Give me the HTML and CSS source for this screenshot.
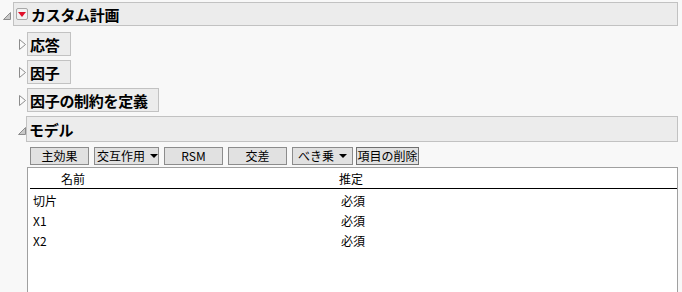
FILE: index.html
```html
<!DOCTYPE html>
<html lang="ja">
<head>
  <meta charset="UTF-8">
  <title>カスタム計画</title>
  <link rel="stylesheet" href="styles.css">
</head>
<body>

  <div class="node top">
    <svg class="tri-open" width="8" height="8" viewBox="0 0 8 8"><path d="M7.5 0.5 L7.5 7.5 L0.5 7.5 Z" fill="#c8c8c8" stroke="#8c8c8c" stroke-width="1"/></svg>
    <div class="bar main">
      <span class="redbtn"><svg width="8" height="5" viewBox="0 0 8 5"><path d="M0 0 L8 0 L4 5 Z" fill="#e0102a"/></svg></span>
      <span class="title">カスタム計画</span>
    </div>
  </div>

  <div class="children">
    <div class="node">
      <svg class="tri-closed" width="7" height="11" viewBox="0 0 7 11"><path d="M0.5 0.5 L6.5 5.5 L0.5 10.5 Z" fill="#fafafa" stroke="#8c8c8c" stroke-width="1"/></svg>
      <div class="bar small w-resp">応答</div>
    </div>
    <div class="node">
      <svg class="tri-closed" width="7" height="11" viewBox="0 0 7 11"><path d="M0.5 0.5 L6.5 5.5 L0.5 10.5 Z" fill="#fafafa" stroke="#8c8c8c" stroke-width="1"/></svg>
      <div class="bar small w-fact">因子</div>
    </div>
    <div class="node">
      <svg class="tri-closed" width="7" height="11" viewBox="0 0 7 11"><path d="M0.5 0.5 L6.5 5.5 L0.5 10.5 Z" fill="#fafafa" stroke="#8c8c8c" stroke-width="1"/></svg>
      <div class="bar small w-cons">因子の制約を定義</div>
    </div>
    <div class="node model">
      <svg class="tri-open" width="8" height="8" viewBox="0 0 8 8"><path d="M7.5 0.5 L7.5 7.5 L0.5 7.5 Z" fill="#c8c8c8" stroke="#8c8c8c" stroke-width="1"/></svg>
      <div class="bar wide">モデル</div>
    </div>

    <div class="model-body">
      <div class="buttons">
        <button class="b-main">主効果</button>
        <button class="b-menu b-inter">交互作用 <span class="caret"></span></button>
        <button class="b-rsm">RSM</button>
        <button class="b-cross">交差</button>
        <button class="b-menu b-power">べき乗 <span class="caret"></span></button>
        <button class="b-del">項目の削除</button>
      </div>

      <div class="table">
        <div class="row head">
          <span class="c1">名前</span>
          <span class="c2">推定</span>
        </div>
        <div class="row">
          <span class="c1">切片</span>
          <span class="c2">必須</span>
        </div>
        <div class="row">
          <span class="c1">X1</span>
          <span class="c2">必須</span>
        </div>
        <div class="row">
          <span class="c1">X2</span>
          <span class="c2">必須</span>
        </div>
      </div>
    </div>
  </div>

</body>
</html>
```

FILE: styles.css
```css
html {
  overflow: hidden;
}

body {
  margin: 0;
  padding: 2px 4px 0 3px;
  background: #f8f8f8;
  font-family: "Noto Sans CJK JP", "Noto Sans", sans-serif;
  font-size: 12px;
  color: #000;
}

.node {
  display: flex;
  align-items: center;
}

.tri-open {
  flex: none;
  margin-right: 2px;
}

.top .tri-open {
  margin-top: 3px;
}

.tri-closed {
  flex: none;
  margin-right: 1px;
  margin-top: 1px;
}

.bar {
  box-sizing: border-box;
  height: 24px;
  background: #ececec;
  border: 1px solid #c2c2c2;
  display: flex;
  align-items: center;
  font-weight: bold;
  font-size: 15px;
  line-height: 1;
  letter-spacing: -0.3px;
}

.main {
  flex: 1;
  padding-left: 2px;
}

.redbtn {
  box-sizing: border-box;
  width: 12px;
  height: 12px;
  border: 1px solid #a8a8a8;
  border-radius: 2px;
  background: #f2f2f2;
  display: flex;
  align-items: center;
  justify-content: center;
  margin-right: 3px;
}

.children {
  padding-left: 16px;
  padding-top: 6px;
}

.children .node {
  margin-bottom: 4px;
}

.small {
  padding: 0 0 0 2px;
}

.w-resp { width: 44px; }
.w-fact { width: 44px; }
.w-cons { width: 132px; }

.children .model {
  margin-bottom: 0;
}

.model .tri-open {
  margin-right: 0;
  margin-left: -1px;
  margin-top: 3px;
}

.wide {
  flex: 1;
  height: 26px;
  padding-left: 2px;
}

.model-body {
  padding-left: 8px;
}

.buttons {
  display: flex;
  gap: 5px;
  padding: 5px 0 2px 3px;
}

button {
  box-sizing: border-box;
  height: 18px;
  padding: 0;
  border: 1px solid #8c8c8c;
  background: #e1e1e1;
  font-family: inherit;
  font-size: 12px;
  line-height: 1;
  color: #000;
  display: flex;
  align-items: center;
  justify-content: center;
}

.b-main { width: 59px; }
.b-inter { width: 65px; justify-content: flex-start; padding-left: 2px; }
.b-rsm { width: 59px; }
.b-cross { width: 59px; }
.b-power { width: 61px; }
.b-del { width: 63px; margin-left: -2px; border-color: #707070; }

.caret {
  display: inline-block;
  width: 0;
  height: 0;
  border-left: 4px solid transparent;
  border-right: 4px solid transparent;
  border-top: 4px solid #000;
  margin-left: 5px;
}

.table {
  box-sizing: border-box;
  height: 125px;
  background: #fff;
  border: 1px solid #a0a0a0;
  border-bottom: none;
}

.row {
  display: flex;
  height: 20px;
  align-items: center;
}

.head {
  margin-left: 2px;
  border-bottom: 1.5px solid #000;
}

.c1 {
  width: 308px;
  padding-left: 5px;
}

.head .c1 {
  width: 278px;
  padding-left: 31px;
}

.row:nth-child(2) {
  margin-top: 1px;
}
```
